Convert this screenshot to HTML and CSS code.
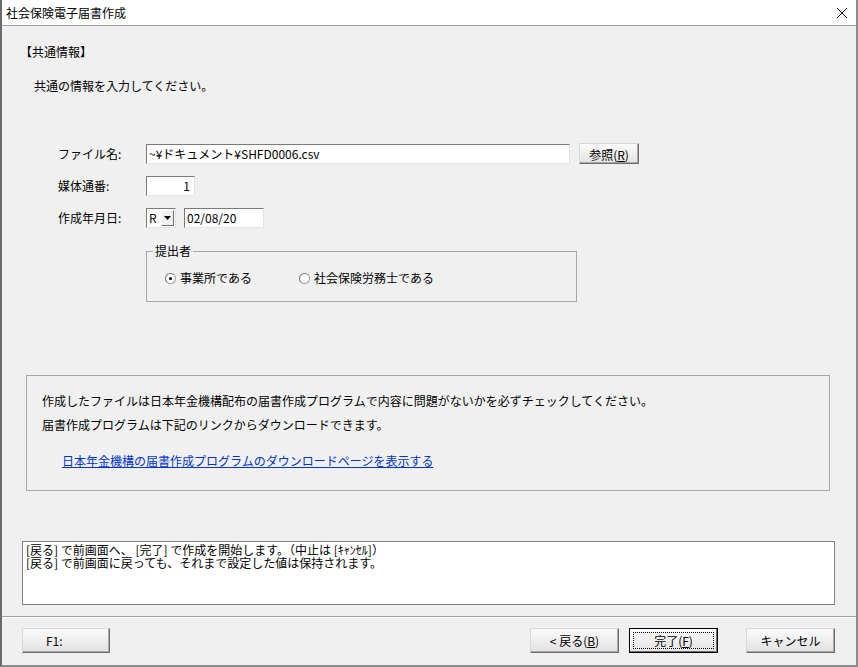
FILE: index.html
```html
<!DOCTYPE html>
<html lang="ja">
<head>
    <meta charset="UTF-8">
    <title>社会保険電子届書作成</title>
    <link rel="stylesheet" href="styles.css">
</head>
<body>
<div class="window">

    <!-- Title bar -->
    <div class="titlebar">
        <span class="title">社会保険電子届書作成</span>
        <svg class="close" width="12" height="12" viewBox="0 0 12 12">
            <path d="M1 1 L11 11 M11 1 L1 11" stroke="#111" stroke-width="1" fill="none"/>
        </svg>
    </div>

    <div class="content">
        <div class="section-title">【共通情報】</div>
        <div class="lead">共通の情報を入力してください。</div>

        <!-- Common info form -->
        <div class="form">
            <div class="row">
                <label class="label">ファイル名:</label>
                <div class="field file-field">~¥ドキュメント¥SHFD0006.csv</div>
                <button class="btn browse">参照(<u>R</u>)</button>
            </div>
            <div class="row">
                <label class="label">媒体通番:</label>
                <div class="field num-field">1</div>
            </div>
            <div class="row">
                <label class="label">作成年月日:</label>
                <div class="combo">
                    <span class="combo-value">R</span>
                    <span class="combo-btn">
                        <svg width="7" height="4" viewBox="0 0 7 4"><path d="M0 0 H7 L3.5 4 Z" fill="#000"/></svg>
                    </span>
                </div>
                <div class="field date-field">02/08/20</div>
            </div>

            <fieldset class="group">
                <legend>提出者</legend>
                <div class="radios">
                    <span class="radio-item first"><span class="radio checked"></span>事業所である</span>
                    <span class="radio-item"><span class="radio"></span>社会保険労務士である</span>
                </div>
            </fieldset>
        </div>

        <!-- Notice -->
        <div class="notice">
            <p>作成したファイルは日本年金機構配布の届書作成プログラムで内容に問題がないかを必ずチェックしてください。</p>
            <p>届書作成プログラムは下記のリンクからダウンロードできます。</p>
            <a class="link" href="#">日本年金機構の届書作成プログラムのダウンロードページを表示する</a>
        </div>

        <div class="message">
            <div>[戻る] で前画面へ、 [完了] で作成を開始します。（中止は [ｷｬﾝｾﾙ]）</div>
            <div>[戻る] で前画面に戻っても、それまで設定した値は保持されます。</div>
        </div>
    </div>

    <div class="separator"></div>

    <!-- Bottom buttons -->
    <div class="buttons">
        <button class="btn f1">F1:</button>
        <div class="spacer"></div>
        <button class="btn">&lt; 戻る(<u>B</u>)</button>
        <button class="btn default"><span class="focus">完了(<u>F</u>)</span></button>
        <button class="btn cancel">キャンセル</button>
    </div>

</div>
</body>
</html>
```

FILE: styles.css
```css
/* Basic Styles */
body {
    margin: 0;
    padding: 0;
    background-color: #3a3a3a;
    font-family: "Noto Sans CJK JP", "Liberation Sans", sans-serif;
    font-size: 12px;
    color: #000;
}
.window {
    width: 858px;
    height: 667px;
    box-sizing: border-box;
    background-color: #f0f0f0;
    border-left: 2px solid #6b6b6b;
    border-right: 2px solid #8a8a8a;
    border-bottom: 2px solid #8a8a8a;
    overflow: hidden;
}
.titlebar {
    height: 25px;
    margin-left: -2px;
    margin-right: -2px;
    background-color: #fff;
    border-bottom: 1px solid #a0a0a0;
    display: flex;
    align-items: center;
    justify-content: space-between;
    padding: 0 10px 0 6px;
}
.title {
    line-height: 16px;
}
.close {
    margin-top: 1px;
}
.content {
    padding-top: 18px;
}
.section-title {
    line-height: 16px;
    padding-left: 18px;
}
.lead {
    line-height: 16px;
    margin-top: 18px;
    padding-left: 32px;
}

/* Form */
.form {
    margin-top: 49px;
    padding-left: 56px;
}
.row {
    display: flex;
    align-items: center;
    height: 21px;
    margin-bottom: 11px;
}
.label {
    width: 88px;
    line-height: 16px;
}
.field {
    height: 20px;
    box-sizing: border-box;
    background-color: #fff;
    border: 1px solid #e3e3e3;
    border-top-color: #7a7a7a;
    border-left-color: #7a7a7a;
    line-height: 18px;
    padding: 0 2px;
    white-space: nowrap;
}
.file-field {
    width: 424px;
}
.num-field {
    width: 49px;
    text-align: right;
    padding-right: 4px;
}
.date-field {
    width: 80px;
    margin-left: 8px;
}
.combo {
    width: 30px;
    height: 20px;
    box-sizing: border-box;
    background-color: #fff;
    border: 1px solid #e3e3e3;
    border-top-color: #7a7a7a;
    border-left-color: #7a7a7a;
    display: flex;
    align-items: stretch;
}
.combo-value {
    flex: 1;
    line-height: 18px;
    padding-left: 2px;
}
.combo-btn {
    width: 13px;
    margin: 1px;
    box-sizing: border-box;
    background-color: #f0f0f0;
    border: 1px solid #fff;
    border-right-color: #6e6e6e;
    border-bottom-color: #6e6e6e;
    display: flex;
    align-items: center;
    justify-content: center;
}

/* Buttons */
.btn {
    font-family: inherit;
    font-size: 12px;
    height: 25px;
    width: 89px;
    padding: 0;
    box-sizing: border-box;
    color: #000;
    background: linear-gradient(#fbfbfb, #e2e2e2);
    border: 1px solid #6e6e6e;
    border-top-color: #d8d8d8;
    border-left-color: #d8d8d8;
    box-shadow: inset -1px -1px 0 #a8a8a8;
}
.browse {
    width: 60px;
    height: 21px;
    margin-left: 9px;
    padding-top: 1px;
}
.default {
    border: 1px solid #000;
    box-shadow: inset -1px -1px 0 #6e6e6e, inset 1px 1px 0 #fff;
    padding: 3px;
}
.focus {
    display: block;
    height: 100%;
    box-sizing: border-box;
    border: 1px dotted #000;
    line-height: 15px;
}

/* Group box */
.group {
    margin: 15px 0 0 88px;
    width: 431px;
    box-sizing: border-box;
    border: 1px solid #a8a8a8;
    padding: 0 0 15px 18px;
}
.group legend {
    line-height: 16px;
    margin-left: -12px;
    padding: 0 2px;
}
.radios {
    margin-top: 11px;
    display: flex;
    line-height: 16px;
}
.radio-item {
    display: flex;
    align-items: center;
}
.radio-item.first {
    width: 134px;
}
.radio {
    width: 11px;
    height: 11px;
    box-sizing: border-box;
    border-radius: 50%;
    background-color: #fff;
    border: 1px solid #a0a0a0;
    border-top-color: #777;
    border-left-color: #777;
    margin-right: 4px;
    position: relative;
}
.radio.checked::after {
    content: "";
    position: absolute;
    left: 3px;
    top: 3px;
    width: 3px;
    height: 3px;
    border-radius: 50%;
    background-color: #000;
}

/* Notice box */
.notice {
    margin: 73px 26px 0 24px;
    border: 1px solid #a8a8a8;
    padding: 17px 0 21px 15px;
}
.notice p {
    margin: 0 0 8px 0;
    line-height: 16px;
}
.link {
    display: inline-block;
    margin-top: 12px;
    margin-left: 20px;
    line-height: 16px;
    color: #0033cc;
    text-decoration: underline;
}

/* Message */
.message {
    margin: 50px 21px 0 20px;
    height: 64px;
    box-sizing: border-box;
    background-color: #fff;
    border: 1px solid #828282;
    padding: 1px 3px;
    line-height: 13px;
    white-space: nowrap;
}
.separator {
    margin-top: 11px;
    border-top: 1px solid #a0a0a0;
    border-bottom: 1px solid #fff;
}
.buttons {
    display: flex;
    align-items: center;
    margin-top: 10px;
    padding: 0 21px 0 20px;
    gap: 10px;
}
.f1 {
    width: 88px;
    text-align: left;
    padding-left: 23px;
}
.spacer {
    flex: 1;
}
.cancel {
    margin-left: 18px;
}
```
